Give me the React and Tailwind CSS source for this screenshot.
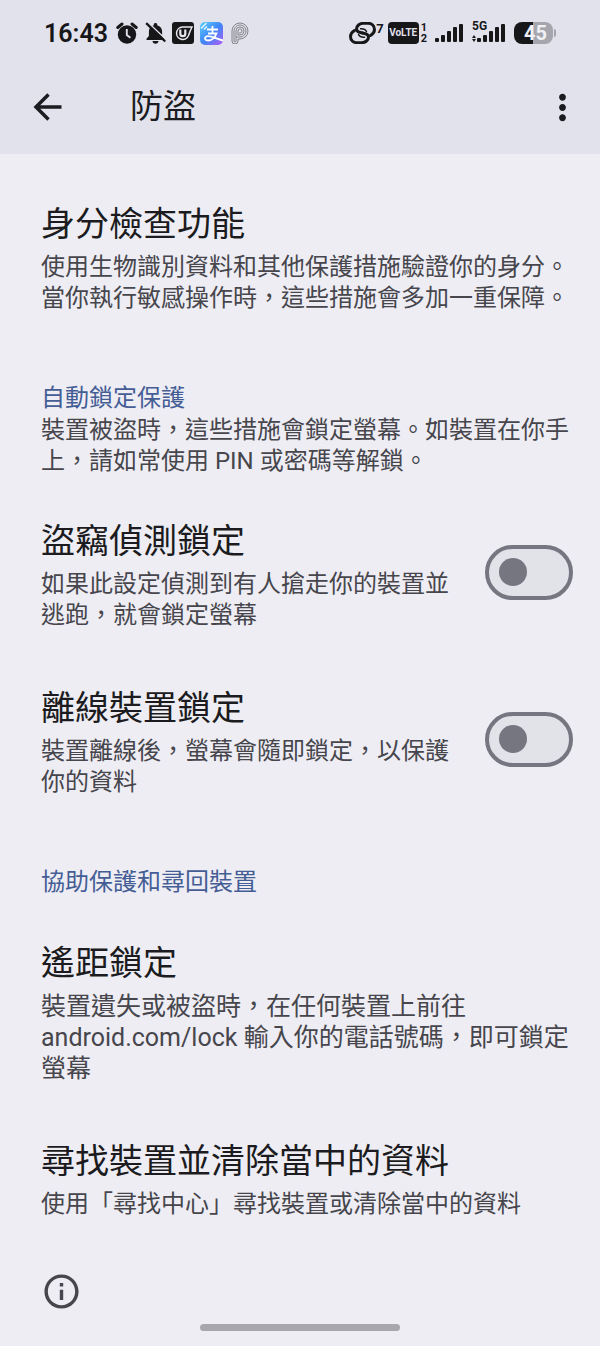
import { useState } from "react";
import { MdMoreVert, MdOutlineInfo } from "react-icons/md";

const BARS = [
  { x: 0, h: 4 },
  { x: 6, h: 7 },
  { x: 12, h: 11 },
  { x: 18, h: 15 },
  { x: 24, h: 18 },
];

function AlarmIcon() {
  return (
    <svg width="22" height="22" viewBox="0 0 22 22" fill="none" aria-hidden="true">
      <circle cx="11" cy="12.5" r="9.2" fill="#17171a" />
      <path d="M1.800 5.500 6 2M20.200 5.500 16 2" stroke="#17171a" strokeWidth="3" strokeLinecap="round" />
      <path d="M10.800 7v6l3.600 2.800" stroke="#e2e2ec" strokeWidth="1.900" />
    </svg>
  );
}

function BellOffIcon() {
  return (
    <svg width="22" height="22" viewBox="0 0 22 22" aria-hidden="true">
      <path
        d="M11.500 1c1 0 1.700.7 1.700 1.600v.6c3 .8 4.900 3.200 4.900 6.300V14l2.400 2.700V18H2.500v-1.300L4.900 14V9.500c0-3.100 1.900-5.500 4.900-6.300v-.6C9.800 1.700 10.500 1 11.500 1ZM8.500 19h6c0 1.500-1.300 2.700-3 2.700s-3-1.200-3-2.700Z"
        fill="#17171a"
      />
      <path d="m3.500 0 19 18" stroke="#e2e2ec" strokeWidth="1.500" />
      <path d="m2.200 1.200 19 18.300" stroke="#17171a" strokeWidth="2.300" />
    </svg>
  );
}

function AppBadgeIcon() {
  return (
    <svg width="22" height="22" viewBox="0 0 22 22" fill="none" aria-hidden="true">
      <rect width="22" height="22" rx="3" fill="#17171a" />
      <path d="M20 5h-9.500a6.200 6.200 0 1 0 6 8.500C17.500 10.500 18.500 8 20 5Z" stroke="#e8e8ee" strokeWidth="1.500" />
      <path d="M8.300 7.500v4.300c0 3.200 5 3.200 5 0V7.500" stroke="#e8e8ee" strokeWidth="2.200" />
    </svg>
  );
}

function PayIcon() {
  return (
    <svg width="23" height="23" viewBox="0 0 23 23" fill="none" aria-hidden="true">
      <defs>
        <linearGradient id="pay" x1="0" y1="0" x2="1" y2="1">
          <stop offset="0" stopColor="#5fd0fb" />
          <stop offset=".5" stopColor="#3f86f8" />
          <stop offset="1" stopColor="#b05cf5" />
        </linearGradient>
      </defs>
      <rect width="23" height="23" rx="5" fill="url(#pay)" />
      <path
        d="M7 7.500h11M12.500 4v7.500M8 11.500h8.500C15 15.500 11.500 18.500 8 18.500c-4 0-4-4.300 0-4.300 4.500 0 8.500 2.800 15 4.300"
        stroke="#fff"
        strokeWidth="1.800"
      />
      <path d="M1 6.500 6.500 1M4 7.500l3-3" stroke="#dff5ff" strokeWidth="1.500" />
    </svg>
  );
}

function ParkIcon() {
  return (
    <svg width="20" height="22" viewBox="-2 0 20 22" fill="none" stroke="#77777f" strokeWidth=".9" aria-hidden="true">
      <path d="M1 19V9a8 8 0 1 1 8 8H7v2a3 3 0 0 1-6 0Z" />
      <path d="M3 19V9a6 6 0 1 1 6 6H5v4a1 1 0 0 1-2 0Z" />
      <path d="M5 15V9a4 4 0 1 1 4 4H7V9a2 2 0 1 1 2 2H8" />
    </svg>
  );
}

function LinkIcon() {
  const half = "M21.500 13.500c2.500-1.500 4-3.500 4-6 0-3.800-2.600-6.200-6.500-6.200h-4.500c-4 0-7 2.600-7 5.700 0 3 3 3.600 6 4";
  return (
    <svg width="27" height="22" viewBox="0 0 27 22" fill="none" stroke="#17171a" strokeWidth="3" strokeLinecap="round" aria-hidden="true">
      <path d={half} />
      <path d={half} transform="rotate(180 13.5 11)" />
      <path d="M9.500 12.500c1 2 3 3 6 2.800M17.500 9.500c-1-2-3-3-6-2.800" strokeWidth="1.500" />
    </svg>
  );
}

function BackIcon() {
  return (
    <svg width="40" height="40" viewBox="0 0 40 40" fill="none" stroke="currentColor" strokeWidth="3.500" aria-hidden="true">
      <path d="M33.500 20H9M20.500 7.500 8 20l12.500 12.500" />
    </svg>
  );
}

function SignalBars() {
  return (
    <svg width="29" height="18" viewBox="0 0 29 18" fill="#17171a" aria-hidden="true">
      {BARS.map((bar) => (
        <rect key={bar.x} x={bar.x} y={18 - bar.h} width="4" height={bar.h} rx="1" />
      ))}
    </svg>
  );
}

function StatusBar() {
  return (
    <div className="flex h-[66px] items-center justify-between px-11 text-[#17171a]">
      <div className="flex items-center gap-1.5">
        <span className="mr-0.5 font-[Roboto] text-[25px] font-semibold leading-none">16:43</span>
        <AlarmIcon />
        <BellOffIcon />
        <AppBadgeIcon />
        <PayIcon />
        <ParkIcon />
      </div>

      <div className="flex items-center gap-2">
        <div className="flex items-center gap-1">
          <div className="flex items-start">
            <LinkIcon />
            <span className="font-[Roboto] text-[13px] font-bold leading-none">7</span>
          </div>
          <div className="flex items-center gap-0.5">
            <span className="flex h-[22px] w-[31px] items-center justify-center rounded-sm bg-[#17171a] font-[Roboto] text-[10px] font-bold leading-none text-[#e2e2ec]">
              VoLTE
            </span>
            <span className="flex flex-col font-[Roboto] text-[11px] font-bold leading-[11px]">
              <span>1</span>
              <span>2</span>
            </span>
          </div>
        </div>
        <SignalBars />
        <div className="relative pl-[5px]">
          <SignalBars />
          <span className="absolute -top-1 left-0 font-[Roboto] text-xs font-bold leading-none">5G</span>
          <svg className="absolute bottom-0 left-0" width="4" height="7" viewBox="0 0 4 7" fill="#17171a" aria-hidden="true">
            <path d="M2 0 4 3H0ZM2 7 0 4h4Z" />
          </svg>
        </div>
        <div className="flex items-center gap-px">
          <span className="flex h-[22px] w-[39px] items-center justify-center rounded-lg bg-linear-to-r from-[#17171a] from-50% to-[#a5a5ad] to-50% pl-1 font-[Roboto] text-xl font-bold leading-none text-[#f0f0f5]">
            45
          </span>
          <span className="h-2 w-0.5 rounded-r bg-[#a5a5ad]" />
        </div>
      </div>
    </div>
  );
}

function Title({ children }) {
  return <h2 className="text-[34px] leading-[56px] text-[#1b1b20]">{children}</h2>;
}

function SectionLabel({ children }) {
  return <h3 className="text-2xl leading-[33px] text-[#455d95]">{children}</h3>;
}

function Toggle({ id, checked, onChange }) {
  return (
    <input
      id={id}
      type="checkbox"
      role="switch"
      checked={checked}
      onChange={(e) => onChange(e.target.checked)}
      className="flex h-[55px] w-[88px] shrink-0 cursor-pointer appearance-none items-center rounded-full border-4 border-[#767680] bg-[#e2e2e9] px-2.5 before:size-7 before:rounded-full before:bg-[#767680] checked:justify-end checked:bg-[#455d95]"
    />
  );
}

function ToggleRow({ id, title, text }) {
  const [on, setOn] = useState(false);

  return (
    <div className="flex items-center justify-between gap-8">
      <label htmlFor={id} className="min-w-0 flex-1">
        <Title>{title}</Title>
        <p>{text}</p>
      </label>
      <Toggle id={id} checked={on} onChange={setOn} />
    </div>
  );
}

export default function App() {
  return (
    <div
      lang="zh-HK"
      className="min-h-screen bg-[#eeedf4] font-[Roboto,'Noto_Sans_CJK_TC',sans-serif] text-2xl leading-[31px] text-[#46464c]"
    >
      <header className="bg-[#e2e2ec] pb-[17px]">
        <StatusBar />
        <div className="flex h-[71px] items-center pt-[11px] text-[#1b1b20]">
          <button type="button" aria-label="返回" className="ml-7">
            <BackIcon />
          </button>
          <h1 className="ml-[62px] flex-1 text-[33px] leading-[48px]">防盜</h1>
          <button type="button" aria-label="更多選項" className="mr-[17px]">
            <MdMoreVert size={41} />
          </button>
        </div>
      </header>

      <main className="pl-[41px] pr-[27px] pt-[42px]">
        <section>
          <Title>身分檢查功能</Title>
          <p>使用生物識別資料和其他保護措施驗證你的身分。當你執行敏感操作時，這些措施會多加一重保障。</p>
        </section>

        <section className="mt-[68px]">
          <SectionLabel>自動鎖定保護</SectionLabel>
          <p>裝置被盜時，這些措施會鎖定螢幕。如裝置在你手上，請如常使用 PIN 或密碼等解鎖。</p>
          <div className="mt-9 flex flex-col gap-[49px]">
            <ToggleRow id="theft-lock" title="盜竊偵測鎖定" text="如果此設定偵測到有人搶走你的裝置並逃跑，就會鎖定螢幕" />
            <ToggleRow id="offline-lock" title="離線裝置鎖定" text="裝置離線後，螢幕會隨即鎖定，以保護你的資料" />
          </div>
        </section>

        <section className="mt-[68px]">
          <SectionLabel>協助保護和尋回裝置</SectionLabel>
          <div className="mt-9 flex flex-col gap-[49px]">
            <div>
              <Title>遙距鎖定</Title>
              <p className="text-[25px]">
                裝置遺失或被盜時，在任何裝置上前往 android.com/lock 輸入你的電話號碼，即可鎖定螢幕
              </p>
            </div>
            <div>
              <Title>尋找裝置並清除當中的資料</Title>
              <p>使用「尋找中心」尋找裝置或清除當中的資料</p>
            </div>
          </div>
        </section>

        <MdOutlineInfo size={41} className="mt-[51px]" />
      </main>

      <div className="mx-auto mt-3 h-[7px] w-1/3 rounded-full bg-[#a8a7ae]" />
    </div>
  );
}
